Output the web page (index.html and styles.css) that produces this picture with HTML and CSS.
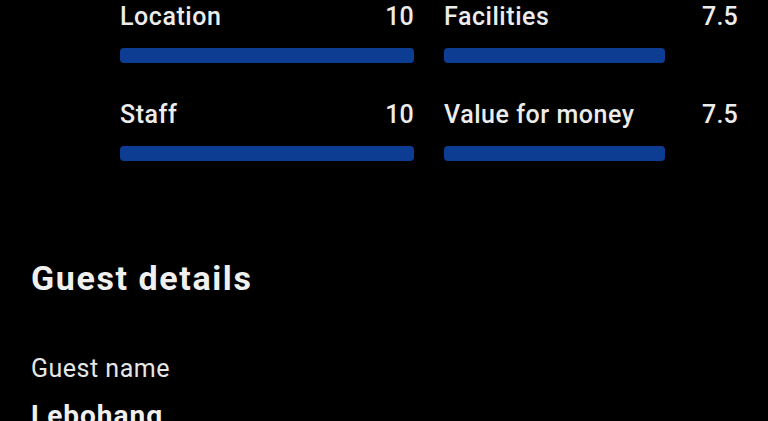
FILE: index.html
```html
<!DOCTYPE html>
<html lang="en">
<head>
<meta charset="utf-8">
<link rel="stylesheet" href="styles.css">
</head>
<body>
<main class="page">
  <section class="ratings">
    <div class="rating">
      <div class="rating-head"><span class="rating-label">Location</span><span class="rating-score">10</span></div>
      <div class="bar"><div class="bar-fill" style="width:100%"></div></div>
    </div>
    <div class="rating">
      <div class="rating-head"><span class="rating-label">Facilities</span><span class="rating-score">7.5</span></div>
      <div class="bar"><div class="bar-fill" style="width:75%"></div></div>
    </div>
    <div class="rating">
      <div class="rating-head"><span class="rating-label">Staff</span><span class="rating-score">10</span></div>
      <div class="bar"><div class="bar-fill" style="width:100%"></div></div>
    </div>
    <div class="rating">
      <div class="rating-head"><span class="rating-label">Value for money</span><span class="rating-score">7.5</span></div>
      <div class="bar"><div class="bar-fill" style="width:75%"></div></div>
    </div>
  </section>
  <section class="guest">
    <h2 class="section-title">Guest details</h2>
    <div class="field-label">Guest name</div>
    <div class="field-value">Lebohang</div>
  </section>
</main>
</body>
</html>
```

FILE: styles.css
```css
html, body {
  margin: 0;
  padding: 0;
  background: #000;
}
body {
  font-family: Roboto, "Liberation Sans", sans-serif;
  color: #ececec;
  overflow: hidden;
  height: 421px;
}
.page {
  display: flex;
  flex-direction: column;
}
.ratings {
  display: grid;
  grid-template-columns: 294px 294px;
  column-gap: 30px;
  row-gap: 37px;
  padding: 2px 0 0 120px;
}
.rating-head {
  display: flex;
  justify-content: space-between;
  font-size: 25px;
  line-height: 30px;
  font-weight: 500;
  letter-spacing: 0.55px;
}
.rating-score {
  letter-spacing: 0.2px;
}
.bar {
  margin-top: 16px;
  height: 15px;
}
.bar-fill {
  height: 100%;
  background: #0d3d92;
  border-radius: 4px;
}
.guest {
  padding: 97px 31px 0;
}
.section-title {
  margin: 0;
  font-size: 34px;
  line-height: 40px;
  font-weight: 700;
  letter-spacing: 1.6px;
  color: #f0f0f0;
}
.field-label {
  margin-top: 56px;
  font-size: 25px;
  line-height: 30px;
  letter-spacing: 0.5px;
  color: #e6e6e6;
}
.field-value {
  margin-top: 15px;
  font-size: 28px;
  line-height: 34px;
  font-weight: 700;
  letter-spacing: 1px;
  color: #f0f0f0;
}
```
